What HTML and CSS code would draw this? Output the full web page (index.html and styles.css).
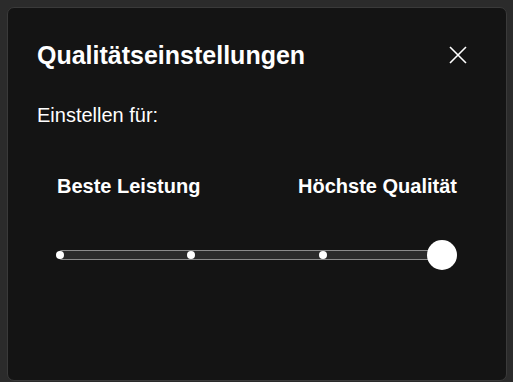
FILE: index.html
```html
<!DOCTYPE html>
<html lang="de">
<head>
<meta charset="utf-8">
<title>Qualitätseinstellungen</title>
<link rel="stylesheet" href="styles.css">
</head>
<body>
<div class="dialog">
  <div class="header">
    <h1 class="title">Qualitätseinstellungen</h1>
    <button class="close" aria-label="Schließen">
      <svg width="18" height="18" viewBox="0 0 18 18"><path d="M1 1L17 17M17 1L1 17" stroke="#fff" stroke-width="1.6" fill="none"/></svg>
    </button>
  </div>
  <p class="subtitle">Einstellen für:</p>
  <div class="slider-block">
    <div class="labels">
      <span>Beste Leistung</span>
      <span>Höchste Qualität</span>
    </div>
    <div class="slider">
      <div class="track">
        <span class="dot"></span>
        <span class="dot"></span>
        <span class="dot"></span>
        <span class="dot hidden"></span>
      </div>
      <span class="thumb"></span>
    </div>
  </div>
</div>
</body>
</html>
```
FILE: styles.css
```css
html, body {
  margin: 0;
  padding: 0;
  background: #2b2b2b;
  height: 100%;
}
body {
  padding: 7px 6px 2px 7px;
  box-sizing: border-box;
  font-family: "Liberation Sans", Arial, sans-serif;
  color: #fff;
}
.dialog {
  box-sizing: border-box;
  width: 500px;
  height: 374px;
  background: #141414;
  border: 1px solid #3a3a3a;
  border-radius: 7px;
  padding: 0 29px 0 29px;
}
.header {
  display: flex;
  justify-content: space-between;
  align-items: center;
  padding-top: 32px;
}
.title {
  margin: 0;
  font-size: 25px;
  font-weight: bold;
  line-height: 30px;
}
.close {
  background: none;
  border: 0;
  padding: 0;
  width: 18px;
  height: 18px;
  margin-right: 10px;
  display: flex;
}
.subtitle {
  margin: 34px 0 0 0;
  font-size: 20px;
  line-height: 23px;
}
.slider-block {
  padding: 0 20px 0 20px;
  margin-top: 48px;
}
.labels {
  display: flex;
  justify-content: space-between;
  font-size: 20px;
  font-weight: bold;
  line-height: 23px;
}
.slider {
  position: relative;
  margin-top: 42px;
  height: 30px;
  display: flex;
  align-items: center;
}
.track {
  box-sizing: border-box;
  flex: 1;
  height: 10px;
  background: #2a2a2a;
  border: 1px solid #8a8a8a;
  border-radius: 5px;
  display: flex;
  justify-content: space-between;
  align-items: center;
}
.dot {
  width: 8px;
  height: 8px;
  border-radius: 50%;
  background: #fff;
  margin: 0 -2px;
}
.dot.hidden { visibility: hidden; }
.thumb {
  position: absolute;
  right: 0;
  top: 0;
  width: 30px;
  height: 30px;
  border-radius: 50%;
  background: #fff;
}
```
